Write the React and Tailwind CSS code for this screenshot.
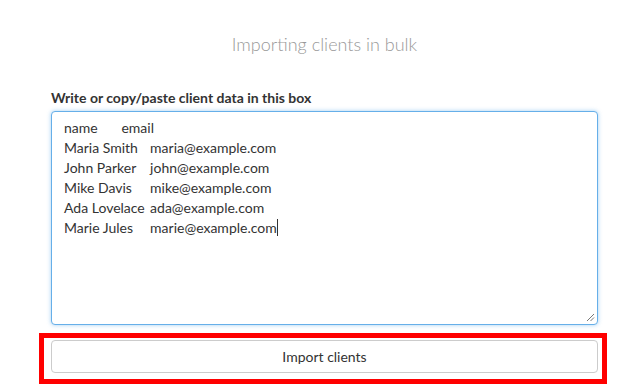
import { useState } from "react";

const initialData = [
  "name\temail",
  "Maria Smith\tmaria@example.com",
  "John Parker\tjohn@example.com",
  "Mike Davis\tmike@example.com",
  "Ada Lovelace\tada@example.com",
  "Marie Jules\tmarie@example.com",
].join("\n");

function App() {
  const [data] = useState(initialData);

  return (
    <div className="w-[628px] h-[388px] bg-white overflow-hidden font-['Lato','Liberation_Sans',sans-serif] text-[#333]">
      <div className="ml-[51px] w-[547px]">
        <h1 className="pt-[32px] text-center text-[18px] leading-[24px] font-light text-[#999]">
          Importing clients in bulk
        </h1>

        <label className="block mt-[32px] text-[14px] leading-[20px] font-bold mb-[3px]">
          Write or copy/paste client data in this box
        </label>

        <div className="relative h-[214px] rounded-[4px] border border-[#66afe9] shadow-[0_0_4px_rgba(102,175,233,0.6)] bg-white px-[12px] py-[6px]">
          <div className="text-[14px] leading-[20px] whitespace-pre [tab-size:28.7px]">
            {data}
            <span className="inline-block w-px h-[17px] bg-[#333] align-[-3px]" />
          </div>
          <svg
            className="absolute right-[2px] bottom-[2px]"
            width="9"
            height="9"
            viewBox="0 0 9 9"
          >
            <path d="M8 1L1 8M8 4.5L4.5 8" stroke="#777" strokeWidth="1" />
          </svg>
        </div>
      </div>

      <div className="ml-[39px] w-[568px] mt-[8px] border-[5px] border-[#ff0000] pl-[7px] pr-[4px] pt-[2px] pb-[6px]">
        <button className="w-full h-[33px] rounded-[4px] border border-[#ccc] bg-white text-[14px] text-[#333]">
          Import clients
        </button>
      </div>
    </div>
  );
}

export default App;
